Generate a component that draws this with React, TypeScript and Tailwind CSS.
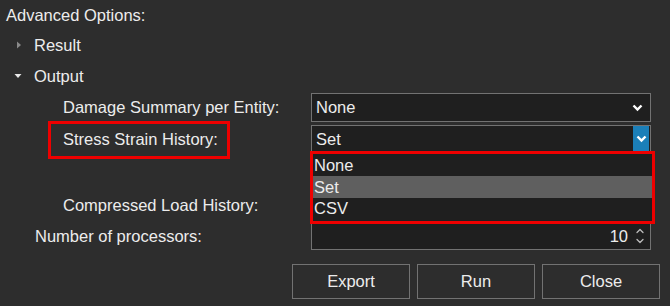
import { ChevronDown, ChevronUp } from "lucide-react";

function Chevron({ className = "" }: { className?: string }) {
  return (
    <svg width="11" height="8" viewBox="0 0 11 8" className={className}>
      <path d="M1.5 1.5 L5.5 5.5 L9.5 1.5" fill="none" stroke="white" strokeWidth="2.4" />
    </svg>
  );
}

export default function App() {
  return (
    <div className="relative h-[306px] w-[670px] overflow-hidden bg-[#2d2d2d] font-['Liberation_Sans',Arial,sans-serif] text-[16.5px] text-[#ececec]">
      <div className="flex h-[30px] items-center pl-[6px]">Advanced Options:</div>

      {/* tree */}
      <div className="flex h-[30px] items-center">
        <svg width="6" height="8" viewBox="0 0 6 8" className="ml-[16px] mr-[12px]">
          <path d="M1 0.5 L5 4 L1 7.5 Z" fill="#8a8a8a" />
        </svg>
        Result
      </div>
      <div className="flex h-[32px] items-center">
        <svg width="8" height="6" viewBox="0 0 8 6" className="ml-[14px] mr-[12px]">
          <path d="M0.5 1 L7.5 1 L4 5 Z" fill="#e8e8e8" />
        </svg>
        Output
      </div>

      <div className="mt-px flex flex-col gap-[3px]">
        <div className="flex h-[29px] items-center">
          <div className="w-[311px] pl-[63px]">Damage Summary per Entity:</div>
          <div className="flex h-full w-[340px] items-center justify-between border border-[#727272] bg-[#1f1f1f] pl-[4px] pr-[7px]">
            <span>None</span>
            <Chevron />
          </div>
        </div>

        <div className="flex h-[28px] items-center">
          <div className="relative w-[311px] pl-[63px]">
            Stress Strain History:
            <div className="absolute left-[48px] top-[-6px] h-[38px] w-[182px] border-[3px] border-[#ee0000]" />
          </div>
          <div className="relative flex h-full w-[340px] items-center justify-between border border-[#727272] border-b-0 bg-[#1f1f1f] pl-[4px] pr-px">
            <span>Set</span>
            <div className="flex h-[25px] w-[16px] items-center justify-center self-start bg-[#1b7fb8]">
              <Chevron />
            </div>
            {/* open list */}
            <div className="absolute left-[-2px] top-[25px] z-10 w-[345px] border-[3px] border-[#ee0000] bg-[#1f1f1f] pb-[2px]">
              <div className="flex h-[22px] items-center pl-px">None</div>
              <div className="flex h-[22px] items-center bg-[#5f5f5f] pl-px">Set</div>
              <div className="flex h-[21px] items-center pl-px">CSV</div>
            </div>
          </div>
        </div>

        <div className="h-[32px]" />

        <div className="flex h-[28px] items-center">
          <div className="w-[311px] pl-[63px]">Compressed Load History:</div>
          <div className="h-full w-[340px] border border-[#727272] bg-[#1f1f1f]" />
        </div>

        <div className="flex h-[28px] items-center">
          <div className="w-[311px] pl-[35px]">Number of processors:</div>
          <div className="flex h-full w-[340px] items-center justify-end gap-[6px] border border-[#727272] bg-[#1f1f1f] pr-[4px]">
            <span>10</span>
            <div className="flex flex-col items-center text-[#bdbdbd]">
              <ChevronUp size={12} strokeWidth={2.5} className="-mb-[2px]" />
              <ChevronDown size={12} strokeWidth={2.5} />
            </div>
          </div>
        </div>
      </div>

      <div className="mt-[14px] flex justify-end gap-[7px] pr-[10px]">
        {["Export", "Run", "Close"].map((label) => (
          <div
            key={label}
            className="flex h-[35px] w-[118px] items-center justify-center border border-[#727272] bg-[#2d2d2d]"
          >
            {label}
          </div>
        ))}
      </div>
    </div>
  );
}
